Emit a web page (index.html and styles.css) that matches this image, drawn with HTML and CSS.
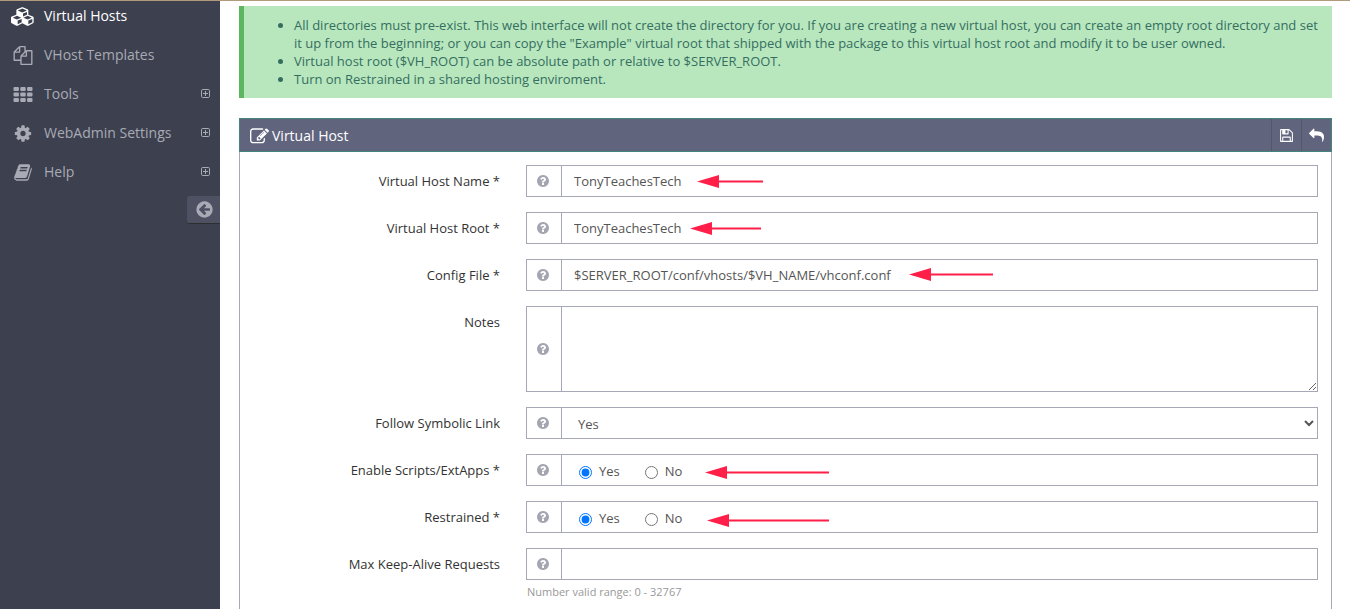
FILE: index.html
```html
<!DOCTYPE html>
<html lang="en">
<head>
<meta charset="utf-8">
<title>Virtual Host</title>
<link rel="stylesheet" href="styles.css">
</head>
<body>
<svg class="defs" aria-hidden="true">
  <symbol id="help" viewBox="0 0 1792 1792"><path d="M1024 1376v-192q0-14-9-23t-23-9h-192q-14 0-23 9t-9 23v192q0 14 9 23t23 9h192q14 0 23-9t9-23zm256-672q0-88-55.5-163t-138.5-116-170-41q-243 0-371 213-15 24 8 42l132 100q7 6 19 6 16 0 25-12 53-68 86-92 34-24 86-24 48 0 85.5 26t37.5 59q0 38-20 61t-68 45q-63 28-115.5 86.5t-52.5 125.5v36q0 14 9 23t23 9h192q14 0 23-9t9-23q0-19 21.5-49.5t54.5-49.5q32-18 49-28.5t46-35 44.5-48 28-60.5 12.5-81zm384 192q0 209-103 385.5t-279.5 279.5-385.5 103-385.5-103-279.5-279.5-103-385.5 103-385.5 279.5-279.5 385.5-103 385.5 103 279.5 279.5 103 385.5z"/></symbol>
  <symbol id="expand" viewBox="0 0 10 10"><rect x=".5" y=".5" width="8" height="8" rx="1.200" fill="none" stroke="currentColor"/><path d="M2 4h5v1h-5zM4 2h1v5h-1z"/></symbol>
</svg>
<div class="layout">
  <aside class="sidebar">
    <nav class="menu">
      <a class="menu-item active" href="#"><svg class="menu-icon" viewBox="0 0 2304 1792"><path d="M640 1632l384-192v-314l-384 164v342zm-64-454l404-173-404-173-404 173zm1088 454l384-192v-314l-384 164v342zm-64-454l404-173-404-173-404 173zm-448-293l384-165v-266l-384 164v267zm-64-379l441-189-441-189-441 189zm1088 518v416q0 36-19 67t-52 47l-448 224q-25 14-57 14t-57-14l-448-224q-4-2-7-4-2 2-7 4l-448 224q-25 14-57 14t-57-14l-448-224q-33-16-52-47t-19-67v-416q0-38 21.500-70t56.500-48l434-186v-400q0-38 21.500-70t56.500-48l448-192q23-10 50-10t50 10l448 192q35 16 56.500 48t21.500 70v400l434 186q36 16 57 48t21 70z"/></svg><span>Virtual Hosts</span></a>
      <a class="menu-item" href="#"><svg class="menu-icon" viewBox="0 0 1792 1792"><path d="M1696 384q40 0 68 28t28 68v1216q0 40-28 68t-68 28h-960q-40 0-68-28t-28-68v-288h-544q-40 0-68-28t-28-68v-672q0-40 20-88t48-76l408-408q28-28 76-48t88-20h416q40 0 68 28t28 68v328q68-40 128-40h416zm-544 213l-299 299h299v-299zm-640-384l-299 299h299v-299zm196 647l316-316v-416h-384v416q0 40-28 68t-68 28h-416v640h512v-256q0-40 20-88t48-76zm956 804v-1152h-384v416q0 40-28 68t-68 28h-416v640h896z"/></svg><span>VHost Templates</span></a>
      <a class="menu-item" href="#"><svg class="menu-icon" viewBox="0 0 1792 1792"><g><rect x="0" y="192" width="512" height="384" rx="96"/><rect x="640" y="192" width="512" height="384" rx="96"/><rect x="1280" y="192" width="512" height="384" rx="96"/><rect x="0" y="704" width="512" height="384" rx="96"/><rect x="640" y="704" width="512" height="384" rx="96"/><rect x="1280" y="704" width="512" height="384" rx="96"/><rect x="0" y="1216" width="512" height="384" rx="96"/><rect x="640" y="1216" width="512" height="384" rx="96"/><rect x="1280" y="1216" width="512" height="384" rx="96"/></g></svg><span>Tools</span><svg class="expand"><use href="#expand"/></svg></a>
      <a class="menu-item" href="#"><svg class="menu-icon" viewBox="0 0 1792 1792"><path d="M1152 896q0-106-75-181t-181-75-181 75-75 181 75 181 181 75 181-75 75-181zm512-109v222q0 12-8 23t-20 13l-185 28q-19 54-39 91 35 50 107 138 10 12 10 25t-9 23q-27 37-99 108t-94 71q-12 0-26-9l-138-108q-44 23-91 38-16 136-29 186-7 28-36 28h-222q-14 0-24.500-8.500t-11.500-21.500l-28-184q-49-16-90-37l-141 107q-10 9-25 9-14 0-25-11-126-114-165-168-7-10-7-23 0-12 8-23 15-21 51-66.500t54-70.500q-27-50-41-99l-183-27q-13-2-21-12.500t-8-23.500v-222q0-12 8-23t19-13l186-28q14-46 39-92-40-57-107-138-10-12-10-24 0-10 9-23 26-36 98.500-107.500t94.500-71.500q13 0 26 10l138 107q44-23 91-38 16-136 29-186 7-28 36-28h222q14 0 24.500 8.500t11.500 21.500l28 184q49 16 90 37l142-107q9-9 24-9 13 0 25 10 129 119 165 170 7 8 7 22 0 12-8 23-15 21-51 66.500t-54 70.500q26 50 41 98l183 28q13 2 21 12.500t8 23.500z"/></svg><span>WebAdmin Settings</span><svg class="expand"><use href="#expand"/></svg></a>
      <a class="menu-item" href="#"><svg class="menu-icon" viewBox="0 0 1792 1792"><path d="M1703 478q40 57 18 129l-275 906q-19 64-76.500 107.500t-122.500 43.500h-923q-77 0-148.500-53.500t-99.500-131.500q-24-67-2-127 0-4 3-27t4-37q1-8-3-21.500t-3-19.500q2-11 8-21t16.500-23.500 16.500-23.500q23-38 45-91.500t30-91.500q3-10 .5-30t-.5-28q3-11 17-28t17-23q21-36 42-92t25-90q1-9-2.500-32t.5-28q4-13 22-30.500t22-22.500q19-26 42.500-84.500t27.500-96.500q1-8-3-25.500t-2-26.500q2-8 9-18t18-23 17-21q8-12 16.500-30.500t15-35 16-36 19.500-32 26.500-23.500 36-11.500 47.500 5.500l-1 3q38-9 51-9h761q74 0 114 56t18 130l-274 906q-36 119-71.500 153.500t-128.500 34.500h-869q-27 0-38 15-11 16-1 43 24 70 144 70h923q29 0 56-15.500t35-41.500l300-987q7-22 5-57 38 15 59 43zm-1064 2q-4 13 2 22.500t20 9.500h608q13 0 25.500-9.500t16.500-22.500l21-64q4-13-2-22.500t-20-9.500h-608q-13 0-25.500 9.500t-16.500 22.500zm-83 256q-4 13 2 22.500t20 9.500h608q13 0 25.500-9.500t16.500-22.500l21-64q4-13-2-22.500t-20-9.500h-608q-13 0-25.500 9.500t-16.500 22.500z"/></svg><span>Help</span><svg class="expand"><use href="#expand"/></svg></a>
    </nav>
    <button class="collapse" type="button" aria-label="Collapse menu"><svg viewBox="0 0 1792 1792"><path d="M1408 960v-128q0-26-19-45t-45-19h-502l189-189q19-19 19-45t-19-45l-91-91q-18-18-45-18t-45 18l-362 362-91 91q-18 18-18 45t18 45l91 91 362 362q18 18 45 18t45-18l91-91q18-18 18-45t-18-45l-189-189h502q26 0 45-19t19-45zm256-64q0 209-103 385.500t-279.500 279.500-385.500 103-385.500-103-279.500-279.500-103-385.500 103-385.500 279.500-279.500 385.500-103 385.500 103 279.500 279.500 103 385.500z"/></svg></button>
  </aside>
  <main class="content">
    <div class="notice">
      <ul>
        <li>All directories must pre-exist. This web interface will not create the directory for you. If you are creating a new virtual host, you can create an empty root directory and set it up from the beginning; or you can copy the "Example" virtual root that shipped with the package to this virtual host root and modify it to be user owned.</li>
        <li>Virtual host root ($VH_ROOT) can be absolute path or relative to $SERVER_ROOT.</li>
        <li>Turn on Restrained in a shared hosting enviroment.</li>
      </ul>
    </div>
    <section class="widget">
      <header class="widget-head">
        <svg class="title-icon" viewBox="0 0 1792 1792"><path d="M888 1184l116-116-152-152-116 116v56h96v96h56zm440-720q-16-16-33 1l-350 350q-17 17-1 33t33-1l350-350q17-17 1-33zm80 594v190q0 119-84.500 203.500t-203.500 84.500h-832q-119 0-203.500-84.500t-84.500-203.500v-832q0-119 84.500-203.500t203.500-84.500h832q63 0 117 25 15 7 18 23 3 17-9 29l-49 49q-14 14-32 8-23-6-45-6h-832q-66 0-113 47t-47 113v832q0 66 47 113t113 47h832q66 0 113-47t47-113v-126q0-13 9-22l64-64q15-15 35-7t20 29zm-96-738l288 288-672 672h-288v-288zm444 132l-92 92-288-288 92-92q28-28 68-28t68 28l152 152q28 28 28 68t-28 68z"/></svg>
        <h2>Virtual Host</h2>
        <button class="tool" type="button" aria-label="Save"><svg viewBox="0 0 1792 1792"><path d="M512 1536h768v-384h-768v384zm896 0h128v-896q0-14-10-38.500t-20-34.500l-281-281q-10-10-34-20t-39-10v416q0 40-28 68t-68 28h-576q-40 0-68-28t-28-68v-416h-128v1280h128v-416q0-40 28-68t68-28h832q40 0 68 28t28 68v416zm-384-928v-320q0-13-9.500-22.500t-22.500-9.500h-192q-13 0-22.500 9.500t-9.500 22.500v320q0 13 9.500 22.500t22.500 9.500h192q13 0 22.500-9.500t9.500-22.500zm640 32v928q0 40-28 68t-68 28h-1344q-40 0-68-28t-28-68v-1344q0-40 28-68t68-28h928q40 0 88 20t76 48l280 280q28 28 48 76t20 88z"/></svg></button>
        <button class="tool" type="button" aria-label="Go back"><svg viewBox="0 0 1792 1792"><path transform="matrix(-1 0 0 1 1792 0)" d="M1792 640q0 26-19 45l-512 512q-19 19-45 19t-45-19-19-45v-256h-224q-98 0-175.500 6t-154 21.500-133 42.500-105.500 69.500-80 101-48.500 138.500-17.500 181q0 55 5 123 0 6 2.500 23.500t2.500 26.500q0 15-8.500 25t-23.500 10q-16 0-28-17-7-9-13-22t-13.500-30-10.500-24q-127-285-127-451 0-199 53-333 162-403 875-403h224v-256q0-26 19-45t45-19 45 19l512 512q19 19 19 45z"/></svg></button>
      </header>
      <form class="form">
        <div class="row">
          <label for="name">Virtual Host Name *</label>
          <div class="field"><span class="addon"><svg><use href="#help"/></svg></span><input id="name" class="control" type="text" value="TonyTeachesTech"><svg class="arrow a1" width="66" height="13"><path d="M0 6.500L22 0v13zM22 5.500h44v2h-44z"/></svg></div>
        </div>
        <div class="row">
          <label for="root">Virtual Host Root *</label>
          <div class="field"><span class="addon"><svg><use href="#help"/></svg></span><input id="root" class="control" type="text" value="TonyTeachesTech"><svg class="arrow a2" width="71" height="13"><path d="M0 6.500L22 0v13zM22 5.500h49v2h-49z"/></svg></div>
        </div>
        <div class="row">
          <label for="config">Config File *</label>
          <div class="field"><span class="addon"><svg><use href="#help"/></svg></span><input id="config" class="control" type="text" value="$SERVER_ROOT/conf/vhosts/$VH_NAME/vhconf.conf"><svg class="arrow a3" width="84" height="13"><path d="M0 6.500L22 0v13zM22 5.500h62v2h-62z"/></svg></div>
        </div>
        <div class="row">
          <label for="notes">Notes</label>
          <div class="field"><span class="addon"><svg><use href="#help"/></svg></span><textarea id="notes" class="control notes"></textarea></div>
        </div>
        <div class="row">
          <label for="follow">Follow Symbolic Link</label>
          <div class="field"><span class="addon"><svg><use href="#help"/></svg></span><select id="follow" class="control"><option>Yes</option><option>No</option></select></div>
        </div>
        <div class="row">
          <span class="label" id="scripts">Enable Scripts/ExtApps *</span>
          <div class="field" role="radiogroup" aria-labelledby="scripts"><span class="addon"><svg><use href="#help"/></svg></span><div class="control radios"><label><input type="radio" name="scripts" checked>Yes</label><label><input type="radio" name="scripts">No</label></div><svg class="arrow a4" width="124" height="13"><path d="M0 6.500L22 0v13zM22 5.500h102v2h-102z"/></svg></div>
        </div>
        <div class="row">
          <span class="label" id="restrained">Restrained *</span>
          <div class="field" role="radiogroup" aria-labelledby="restrained"><span class="addon"><svg><use href="#help"/></svg></span><div class="control radios"><label><input type="radio" name="restrained" checked>Yes</label><label><input type="radio" name="restrained">No</label></div><svg class="arrow a5" width="122" height="13"><path d="M0 6.500L22 0v13zM22 5.500h100v2h-100z"/></svg></div>
        </div>
        <div class="row">
          <label for="keepalive">Max Keep-Alive Requests</label>
          <div>
            <div class="field"><span class="addon"><svg><use href="#help"/></svg></span><input id="keepalive" class="control" type="text" aria-describedby="range"></div>
            <p class="hint" id="range">Number valid range: 0 - 32767</p>
          </div>
        </div>
      </form>
    </section>
  </main>
</div>
</body>
</html>
```
FILE: styles.css
```css
* { box-sizing: border-box; }

body {
  margin: 0;
  background: #fff;
  color: #333;
  font: 13px/18px "Open Sans", "Liberation Sans", sans-serif;
}

svg { display: block; fill: currentColor; flex: none; }
.defs { display: none; }
button { font: inherit; border: 0; padding: 0; }

.layout {
  display: flex;
  min-height: 100vh;
  border-top: 1px solid #b29a7c;
}

.sidebar {
  flex: none;
  width: 220px;
  background: #3d404e;
  display: flex;
  flex-direction: column;
  gap: 9px;
}

.menu { display: flex; flex-direction: column; gap: 9px; }

.menu-item {
  display: flex;
  align-items: center;
  height: 30px;
  padding: 0 9px 0 11px;
  color: #a8abb5;
  font-size: 14px;
  text-decoration: none;
}
.menu-item.active { color: #fff; }
.menu-icon { width: 24px; height: 19px; margin-right: 9px; }
.expand { width: 10px; height: 10px; margin-left: auto; color: #a8abb5; }

.collapse {
  align-self: flex-end;
  display: flex;
  align-items: center;
  justify-content: center;
  width: 33px;
  height: 28px;
  padding-left: 2px;
  border-bottom: 1px solid #2c2e30;
  border-radius: 3px 0 0 3px;
  background: #4d5162;
  color: #a8abb5;
}
.collapse svg { width: 19px; height: 19px; }

.content {
  flex: 1;
  min-width: 0;
  display: flex;
  flex-direction: column;
  gap: 20px;
  padding: 5px 18px 0 19px;
}

.notice {
  padding: 10px;
  border-left: 5px solid #5cb55f;
  background: #b8e7bd;
  color: #356e61;
}
.notice ul { margin: 0; padding-left: 40px; }

.widget { flex: 1; display: flex; flex-direction: column; }

.widget-head {
  display: flex;
  align-items: center;
  height: 34px;
  border: 1px solid #43857c;
  background: #60647d;
  color: #fff;
}
.widget-head h2 { flex: 1; margin: 0; padding-top: 2px; font-size: 14px; font-weight: 400; }
.title-icon { width: 19px; height: 19px; margin: 2px 3px 0 10px; }
.tool {
  display: flex;
  align-items: center;
  justify-content: center;
  align-self: stretch;
  width: 30px;
  border-left: 1px solid #53576b;
  background: none;
  color: #fff;
}
.tool svg { width: 15px; height: 15px; }

.form {
  flex: 1;
  display: flex;
  flex-direction: column;
  gap: 15px;
  padding: 13px 13px 8px;
  border: solid #a7a8b5;
  border-width: 0 1px;
}

.row { display: grid; grid-template-columns: 247px 1fr; column-gap: 26px; }
.row > label, .label { padding-top: 7px; text-align: right; }

.field { position: relative; display: flex; min-height: 32px; }
.addon {
  display: flex;
  align-items: center;
  justify-content: center;
  width: 35px;
  padding-right: 2px;
  border: 1px solid #a7a8b5;
  border-right: 0;
  color: #a3a5b1;
}
.addon svg { width: 14px; height: 14px; }

.control {
  flex: 1;
  min-width: 0;
  margin: 0;
  padding: 6px 12px;
  border: 1px solid #a7a8b5;
  border-radius: 0;
  background: #fff;
  color: #555;
  font: inherit;
}
select.control { padding: 6px 0 4px 12px; }
.notes { height: 86px; }

.radios { display: flex; gap: 25px; padding: 7px 17px 5px; }
.radios label { display: flex; align-items: center; gap: 7px; }
.radios input { width: 13px; height: 13px; margin: 2px 0 0; }

.hint { margin: 4px 0 0 1px; color: #999; font-size: 11px; line-height: 16px; }

/* Pointers laid over the fields */
.arrow { position: absolute; top: 10px; color: #ff1f48; pointer-events: none; }
.a1 { left: 171px; }
.a2 { left: 164px; }
.a3 { left: 383px; top: 9px; }
.a4 { left: 179px; top: 12px; }
.a5 { left: 181px; top: 13px; }
```
